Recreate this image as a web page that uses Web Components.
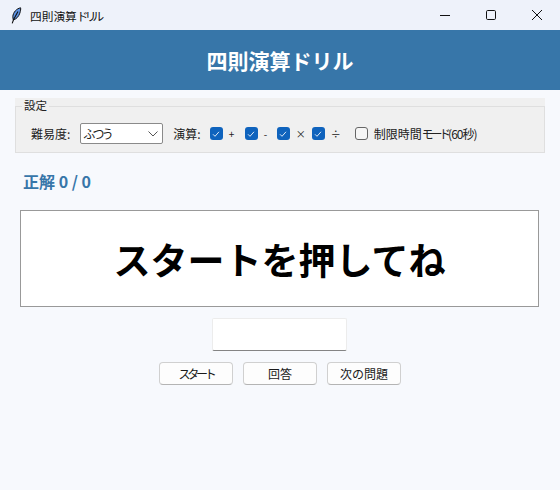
<!DOCTYPE html>
<html lang="ja">
<head>
<meta charset="utf-8">
<title>四則演算ドリル</title>
<style>
  html, body { margin: 0; height: 100%; }
  body {
    width: 560px;
    height: 490px;
    overflow: hidden;
    background: #f7f9fd;
    font-family: "Noto Sans CJK JP", "Noto Sans", sans-serif;
    display: flex;
    flex-direction: column;
  }
  .kana { letter-spacing: -3.2px; }
  title-bar .kana { letter-spacing: -3.8px; }
</style>
</head>
<body>
<title-bar>四則演算<span class="kana">ドリル</span></title-bar>
<app-header>四則演算ドリル</app-header>
<settings-group></settings-group>
<score-label>正解 0 / 0</score-label>
<question-box>スタートを押してね</question-box>
<answer-input></answer-input>
<button-row>
  <drill-button><span class="kana">スタート</span></drill-button>
  <drill-button>回答</drill-button>
  <drill-button>次の問題</drill-button>
</button-row>

<script>
class TitleBar extends HTMLElement {
  constructor() {
    super();
    this.attachShadow({ mode: "open" });
    this.shadowRoot.innerHTML = `
    <style>
      :host {
        display: flex;
        align-items: center;
        height: 30px;
        flex: none;
        background: #eef2fa;
        color: #111;
        font-size: 11.7px;
      }
      .feather { margin-left: 11px; width: 11px; height: 17px; }
      .name { margin-left: 8px; flex: 1; }
      .ctl { width: 46px; height: 30px; display: flex; align-items: center; justify-content: center; }
      .ctl svg { width: 12px; height: 12px; fill: none; stroke: #111; stroke-width: 1; }
    </style>
    <svg class="feather" viewBox="0 0 11 17">
      <path d="M9.6 0.8C5.6 1.6 2.2 5.2 1.8 9.6 L2.2 12.8 C5.2 12.4 7.8 9.4 8.8 6.2 C9.5 4 9.9 2.2 9.6 0.8Z" fill="#5c93e4" stroke="#111" stroke-width="1"/>
      <path d="M7 4.5 L2.6 12.5 L1.2 16.4" fill="none" stroke="#111" stroke-width="1.1"/>
    </svg>
    <span class="name"><slot></slot></span>
    <div class="ctl"><svg viewBox="0 0 12 12"><path d="M1 6.5H11"/></svg></div>
    <div class="ctl"><svg viewBox="0 0 12 12"><rect x="1.5" y="1.5" width="9" height="9" rx="1.2"/></svg></div>
    <div class="ctl"><svg viewBox="0 0 12 12"><path d="M1 1L11 11M11 1L1 11"/></svg></div>`;
  }
}

class AppHeader extends HTMLElement {
  constructor() {
    super();
    this.attachShadow({ mode: "open" });
    this.shadowRoot.innerHTML = `
    <style>
      :host {
        display: flex;
        align-items: center;
        justify-content: center;
        height: 60px;
        flex: none;
        background: #3776a9;
        color: #fff;
        font-size: 21px;
        font-weight: 700;
      }
    </style>
    <slot></slot>`;
  }
}

class CheckItem extends HTMLElement {
  constructor() {
    super();
    this.attachShadow({ mode: "open" });
    const on = this.hasAttribute("checked");
    this.shadowRoot.innerHTML = `
    <style>
      :host { display: inline-flex; align-items: center; gap: 6px; flex: none; }
      .box {
        width: 13px; height: 13px;
        border-radius: 3px;
        box-sizing: border-box;
        display: flex; align-items: center; justify-content: center;
        flex: none;
      }
      .on { background: #0f63bd; }
      .off { background: #f6f6f6; border: 1px solid #666; }
      svg { width: 8px; height: 8px; fill: none; stroke: #dbe8f6; stroke-width: 1; }
    </style>
    <span class="box ${on ? "on" : "off"}">
      ${on ? `<svg viewBox="0 0 8 8"><path d="M1 4.3L3 6.3L7 1.8"/></svg>` : ""}
    </span>
    <slot></slot>`;
  }
}

class SettingsGroup extends HTMLElement {
  constructor() {
    super();
    this.attachShadow({ mode: "open" });
    this.shadowRoot.innerHTML = `
    <style>
      :host {
        display: block;
        flex: none;
        margin: 8px 15px 0;
        padding-top: 8px;
        background: #f0f0f0;
        font-size: 12px;
        color: #222;
        position: relative;
      }
      .frame {
        border: 1px solid #dfdfdf;
        height: 47px;
        box-sizing: border-box;
        display: flex;
        align-items: center;
        padding: 8px 0 0 15px;
      }
      .legend {
        position: absolute;
        left: 7px;
        top: 0;
        padding: 0 2px;
        background: #f0f0f0;
        line-height: 15px;
        font-size: 11.5px;
      }
      .select {
        width: 83px;
        height: 21px;
        box-sizing: border-box;
        margin-left: 10px;
        background: #fff;
        border: 1px solid #8a8a8a;
        border-radius: 2px;
        display: flex;
        align-items: center;
        justify-content: space-between;
        padding: 0 4px 0 2px;
      }
      .select span { letter-spacing: -2.8px; }
      .select svg { width: 10px; height: 6px; fill: none; stroke: #555; stroke-width: 1; }
      .ops { margin: 0 9px 0 10px; }
      .sym { font-size: 10px; }
      .kana { letter-spacing: -3.2px; }
      .paren { letter-spacing: -1px; }
    </style>
    <span class="legend">設定</span>
    <div class="frame">
      <span>難易度:</span>
      <div class="select"><span>ふつう</span><svg viewBox="0 0 10 6"><path d="M0.5 0.5L5 5L9.5 0.5"/></svg></div>
      <span class="ops">演算:</span>
      <check-item checked style="width:35px"><span class="sym">+</span></check-item>
      <check-item checked style="width:32px"><span class="sym">-</span></check-item>
      <check-item checked style="width:35px"><span class="sym">×</span></check-item>
      <check-item checked style="width:43px"><span class="sym">÷</span></check-item>
      <check-item><span>制限時間<span class="kana">モード</span><span class="paren">(60秒)</span></span></check-item>
    </div>`;
  }
}

class ScoreLabel extends HTMLElement {
  constructor() {
    super();
    this.attachShadow({ mode: "open" });
    this.shadowRoot.innerHTML = `
    <style>
      :host {
        display: block;
        flex: none;
        margin: 17px 0 0 23px;
        height: 23px;
        line-height: 23px;
        color: #3776a9;
        font-size: 16px;
        font-weight: 700;
      }
    </style>
    <slot></slot>`;
  }
}

class QuestionBox extends HTMLElement {
  constructor() {
    super();
    this.attachShadow({ mode: "open" });
    this.shadowRoot.innerHTML = `
    <style>
      :host {
        display: flex;
        flex: none;
        align-items: center;
        justify-content: center;
        box-sizing: border-box;
        margin: 17px 21px 0 20px;
        height: 97px;
        background: #fff;
        border: 1px solid #999;
        color: #000;
        font-size: 37px;
        font-weight: 700;
      }
    </style>
    <slot></slot>`;
  }
}

class AnswerInput extends HTMLElement {
  constructor() {
    super();
    this.attachShadow({ mode: "open" });
    this.shadowRoot.innerHTML = `
    <style>
      :host {
        display: block;
        flex: none;
        align-self: center;
        box-sizing: border-box;
        width: 135px;
        height: 33px;
        margin: 11px 1px 0 0;
        background: #fff;
        border: 1px solid #ececec;
        border-bottom: 1px solid #848484;
        border-radius: 2px;
      }
    </style>`;
  }
}

class ButtonRow extends HTMLElement {
  constructor() {
    super();
    this.attachShadow({ mode: "open" });
    this.shadowRoot.innerHTML = `
    <style>
      :host {
        display: flex;
        flex: none;
        justify-content: center;
        gap: 10px;
        margin-top: 11px;
      }
    </style>
    <slot></slot>`;
  }
}

class DrillButton extends HTMLElement {
  constructor() {
    super();
    this.attachShadow({ mode: "open" });
    this.shadowRoot.innerHTML = `
    <style>
      :host {
        display: flex;
        align-items: center;
        justify-content: center;
        box-sizing: border-box;
        width: 74px;
        height: 23px;
        background: #fdfdfd;
        border: 1px solid #d0d0d0;
        border-bottom-color: #b4b4b4;
        border-radius: 4px;
        color: #1a1a1a;
        font-size: 12px;
      }
    </style>
    <slot></slot>`;
  }
}

customElements.define("title-bar", TitleBar);
customElements.define("app-header", AppHeader);
customElements.define("check-item", CheckItem);
customElements.define("settings-group", SettingsGroup);
customElements.define("score-label", ScoreLabel);
customElements.define("question-box", QuestionBox);
customElements.define("answer-input", AnswerInput);
customElements.define("button-row", ButtonRow);
customElements.define("drill-button", DrillButton);
</script>
</body>
</html>
